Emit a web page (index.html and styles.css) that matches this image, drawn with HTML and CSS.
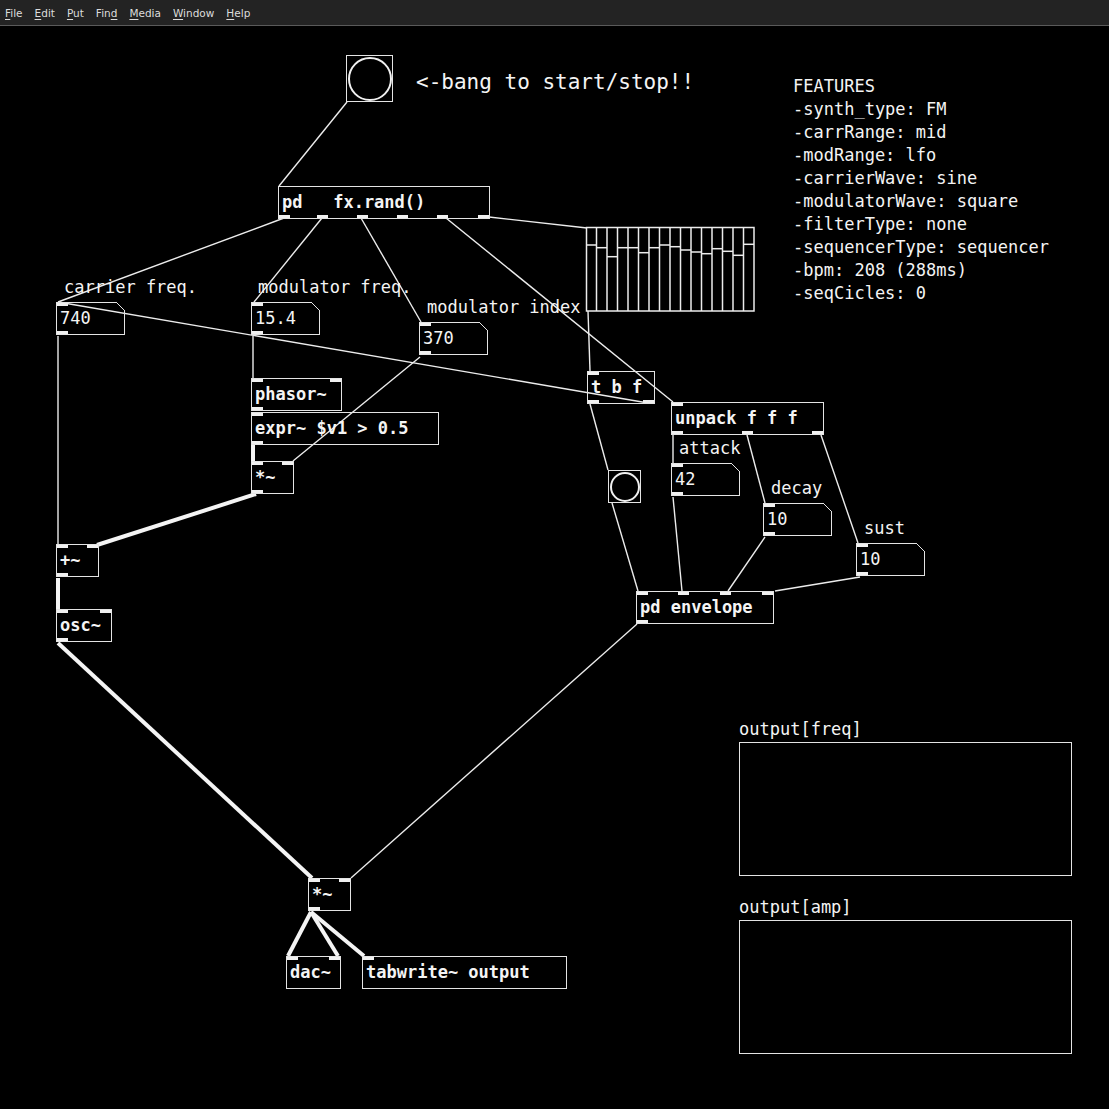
FILE: index.html
```html
<!DOCTYPE html>
<html>
<head>
<meta charset="utf-8">
<link rel="stylesheet" href="styles.css">
</head>
<body>
<div class="menubar">
  <span><u>F</u>ile</span>
  <span><u>E</u>dit</span>
  <span><u>P</u>ut</span>
  <span>Fin<u>d</u></span>
  <span><u>M</u>edia</span>
  <span><u>W</u>indow</span>
  <span><u>H</u>elp</span>
</div>
<div class="canvas">
  <svg class="wires" width="1109" height="1083" viewBox="0 26 1109 1083">
    <g class="thin">
      <line x1="347" y1="102" x2="279" y2="186"/>
      <line x1="284" y1="218" x2="58" y2="302"/>
      <line x1="322" y1="218" x2="254" y2="302"/>
      <line x1="361" y1="218" x2="421" y2="322"/>
      <line x1="446" y1="218" x2="673" y2="402"/>
      <line x1="489" y1="217" x2="587" y2="228"/>
      <line x1="588" y1="311" x2="590" y2="371"/>
      <line x1="648" y1="403" x2="58" y2="302"/>
      <line x1="58" y1="336" x2="58" y2="544"/>
      <line x1="253" y1="336" x2="253" y2="378"/>
      <line x1="420" y1="357" x2="293" y2="461"/>
      <line x1="637" y1="624" x2="351" y2="878"/>
      <line x1="590" y1="404" x2="608" y2="470"/>
      <line x1="612" y1="503" x2="638" y2="591"/>
      <line x1="673" y1="435" x2="673" y2="463"/>
      <line x1="673" y1="497" x2="682" y2="591"/>
      <line x1="747" y1="435" x2="765" y2="503"/>
      <line x1="821" y1="435" x2="858" y2="543"/>
      <line x1="765" y1="537" x2="728" y2="591"/>
      <line x1="860" y1="577" x2="775" y2="591"/>
    </g>
    <g class="thick">
      <line x1="253" y1="445" x2="253" y2="461"/>
      <line x1="256" y1="494" x2="97" y2="545"/>
      <line x1="58" y1="578" x2="58" y2="609"/>
      <line x1="58" y1="643" x2="312" y2="878"/>
      <line x1="311" y1="912" x2="288" y2="956"/>
      <line x1="311" y1="912" x2="338" y2="956"/>
      <line x1="311" y1="912" x2="364" y2="956"/>
    </g>
    <g class="array">
      <rect x="586.5" y="227.5" width="167.5" height="83.5"/>
      <line x1="596.5" y1="227.5" x2="596.5" y2="311"/>
      <line x1="607" y1="227.5" x2="607" y2="311"/>
      <line x1="617.5" y1="227.5" x2="617.5" y2="311"/>
      <line x1="628" y1="227.5" x2="628" y2="311"/>
      <line x1="638.5" y1="227.5" x2="638.5" y2="311"/>
      <line x1="649" y1="227.5" x2="649" y2="311"/>
      <line x1="659.5" y1="227.5" x2="659.5" y2="311"/>
      <line x1="670" y1="227.5" x2="670" y2="311"/>
      <line x1="680.5" y1="227.5" x2="680.5" y2="311"/>
      <line x1="691" y1="227.5" x2="691" y2="311"/>
      <line x1="701.5" y1="227.5" x2="701.5" y2="311"/>
      <line x1="712" y1="227.5" x2="712" y2="311"/>
      <line x1="722.5" y1="227.5" x2="722.5" y2="311"/>
      <line x1="733" y1="227.5" x2="733" y2="311"/>
      <line x1="743.5" y1="227.5" x2="743.5" y2="311"/>
      <line x1="586.5" y1="245" x2="596.5" y2="245"/>
      <line x1="596.5" y1="247.7" x2="607" y2="247.7"/>
      <line x1="607" y1="256.7" x2="617.5" y2="256.7"/>
      <line x1="617.5" y1="247.7" x2="628" y2="247.7"/>
      <line x1="628" y1="247.7" x2="638.5" y2="247.7"/>
      <line x1="638.5" y1="252.7" x2="649" y2="252.7"/>
      <line x1="649" y1="247.7" x2="659.5" y2="247.7"/>
      <line x1="659.5" y1="245" x2="670" y2="245"/>
      <line x1="670" y1="246.7" x2="680.5" y2="246.7"/>
      <line x1="680.5" y1="250" x2="691" y2="250"/>
      <line x1="691" y1="252" x2="701.5" y2="252"/>
      <line x1="701.5" y1="253.7" x2="712" y2="253.7"/>
      <line x1="712" y1="248.7" x2="722.5" y2="248.7"/>
      <line x1="722.5" y1="251.3" x2="733" y2="251.3"/>
      <line x1="733" y1="255.3" x2="743.5" y2="255.3"/>
      <line x1="743.5" y1="244.3" x2="754" y2="244.3"/>
    </g>
  </svg>

  <div class="bang big" style="left:346px;top:29px"></div>
  <div class="comment large" style="left:416px;top:44px">&lt;-bang to start/stop!!</div>

  <div class="comment features" style="left:793px;top:49px">FEATURES
-synth_type: FM
-carrRange: mid
-modRange: lfo
-carrierWave: sine
-modulatorWave: square
-filterType: none
-sequencerType: sequencer
-bpm: 208 (288ms)
-seqCicles: 0</div>

  <div class="box" style="left:278px;top:160px;width:212px">pd   fx.rand()<span class="io bl"></span><span class="io bm" style="left:38px"></span><span class="io bm" style="left:78px"></span><span class="io bm" style="left:118px"></span><span class="io bm" style="left:158px"></span><span class="io br"></span></div>

  <div class="comment" style="left:64px;top:250px">carrier freq.</div>
  <div class="comment" style="left:258px;top:250px">modulator freq.</div>
  <div class="comment" style="left:427px;top:270px">modulator index</div>

  <div class="box num" style="left:56px;top:276px">740<span class="io tl"></span><span class="io bl"></span></div>
  <div class="box num" style="left:251px;top:276px">15.4<span class="io tl"></span><span class="io bl"></span></div>
  <div class="box num" style="left:419px;top:296px">370<span class="io tl"></span><span class="io bl"></span></div>

  <div class="box" style="left:251px;top:352px;width:91px">phasor~<span class="io tl"></span><span class="io tr"></span><span class="io bl"></span></div>
  <div class="box" style="left:251px;top:386px;width:188px">expr~ $v1 &gt; 0.5<span class="io tl"></span><span class="io bl"></span></div>
  <div class="box" style="left:251px;top:435px;width:43px">*~<span class="io tl"></span><span class="io tr"></span><span class="io bl"></span></div>

  <div class="box" style="left:56px;top:518px;width:43px">+~<span class="io tl"></span><span class="io tr"></span><span class="io bl"></span></div>
  <div class="box" style="left:56px;top:583px;width:56px">osc~<span class="io tl"></span><span class="io tr"></span><span class="io bl"></span></div>

  <div class="box" style="left:587px;top:345px;width:68px">t b f<span class="io tl"></span><span class="io bl"></span><span class="io br"></span></div>
  <div class="box" style="left:671px;top:376px;width:153px">unpack f f f<span class="io tl"></span><span class="io bl"></span><span class="io bm" style="left:70px"></span><span class="io br"></span></div>

  <div class="comment" style="left:679px;top:411px">attack</div>
  <div class="box num" style="left:671px;top:437px">42<span class="io tl"></span><span class="io bl"></span></div>
  <div class="bang small" style="left:608px;top:444px"></div>

  <div class="comment" style="left:771px;top:451px">decay</div>
  <div class="box num" style="left:763px;top:477px">10<span class="io tl"></span><span class="io bl"></span></div>

  <div class="comment" style="left:864px;top:491px">sust</div>
  <div class="box num" style="left:856px;top:517px">10<span class="io tl"></span><span class="io bl"></span></div>

  <div class="box" style="left:636px;top:565px;width:138px">pd envelope<span class="io tl"></span><span class="io tm" style="left:41px"></span><span class="io tm" style="left:83px"></span><span class="io tr"></span><span class="io bl"></span></div>

  <div class="box" style="left:308px;top:852px;width:43px">*~<span class="io tl"></span><span class="io tr"></span><span class="io bl"></span></div>
  <div class="box" style="left:286px;top:930px;width:55px">dac~<span class="io tl"></span><span class="io tr"></span></div>
  <div class="box" style="left:362px;top:930px;width:205px">tabwrite~ output<span class="io tl"></span></div>

  <div class="comment" style="left:739px;top:692px">output[freq]</div>
  <div class="graph" style="left:739px;top:716px"></div>
  <div class="comment" style="left:739px;top:870px">output[amp]</div>
  <div class="graph" style="left:739px;top:894px"></div>
</div>
</body>
</html>
```

FILE: styles.css
```css
html, body {
  margin: 0;
  padding: 0;
  background: #000;
}

body {
  width: 1109px;
  height: 1109px;
  overflow: hidden;
}

.menubar {
  height: 26px;
  box-sizing: border-box;
  background: #232323;
  border-bottom: 1px solid #5a5a5a;
  display: flex;
  align-items: center;
  gap: 12px;
  padding-left: 5px;
  font-family: "DejaVu Sans", sans-serif;
  font-size: 10.5px;
  color: #dcdcdc;
}

.menubar u {
  text-decoration-thickness: 1px;
  text-underline-offset: 2px;
}

.canvas {
  position: relative;
  height: 1083px;
  background: #000;
  font-family: "DejaVu Sans Mono", monospace;
  color: #f4f4f4;
}

.wires {
  position: absolute;
  left: 0;
  top: 0;
}

.wires line, .wires rect {
  stroke: #ececec;
  fill: none;
}

.thin line {
  stroke-width: 1.4;
}

.thick line {
  stroke-width: 4;
  stroke: #f4f4f4;
}

.array rect, .array line {
  stroke-width: 1.5;
}

.box {
  position: absolute;
  box-sizing: border-box;
  height: 33px;
  width: 69px;
  border: 1px solid #e4e4e4;
  display: flex;
  align-items: center;
  padding-left: 3px;
  padding-bottom: 1px;
  font-size: 17px;
  font-weight: bold;
  line-height: 21px;
  white-space: pre;
}

.num {
  font-weight: normal;
}

.num::before {
  content: "";
  position: absolute;
  top: -1px;
  right: -1px;
  width: 9px;
  height: 9px;
  background: linear-gradient(to top right, transparent calc(50% - 0.7px), #e4e4e4 calc(50% - 0.7px), #e4e4e4 calc(50% + 0.7px), #000 calc(50% + 0.7px));
}

.io {
  position: absolute;
  width: 11px;
  height: 3px;
  background: #f0f0f0;
}

.tl { top: 0; left: 0; }
.tr { top: 0; right: 0; }
.tm { top: 0; }
.bl { bottom: 0; left: 0; }
.br { bottom: 0; right: 0; }
.bm { bottom: 0; }

.comment {
  position: absolute;
  font-size: 17px;
  line-height: 23px;
  white-space: pre;
}

.comment.large {
  font-size: 21px;
  line-height: 25px;
}

.bang {
  position: absolute;
  box-sizing: border-box;
  border: 1px solid #e4e4e4;
  background: #000;
  padding: 0.5px;
}

.bang::after {
  content: "";
  display: block;
  box-sizing: border-box;
  width: 100%;
  height: 100%;
  border-radius: 50%;
  border: 2.5px solid #f0f0f0;
}

.bang.big {
  width: 47px;
  height: 47px;
}

.bang.small {
  width: 33px;
  height: 33px;
}

.graph {
  position: absolute;
  box-sizing: border-box;
  width: 333px;
  height: 134px;
  border: 1px solid #e4e4e4;
}
```
